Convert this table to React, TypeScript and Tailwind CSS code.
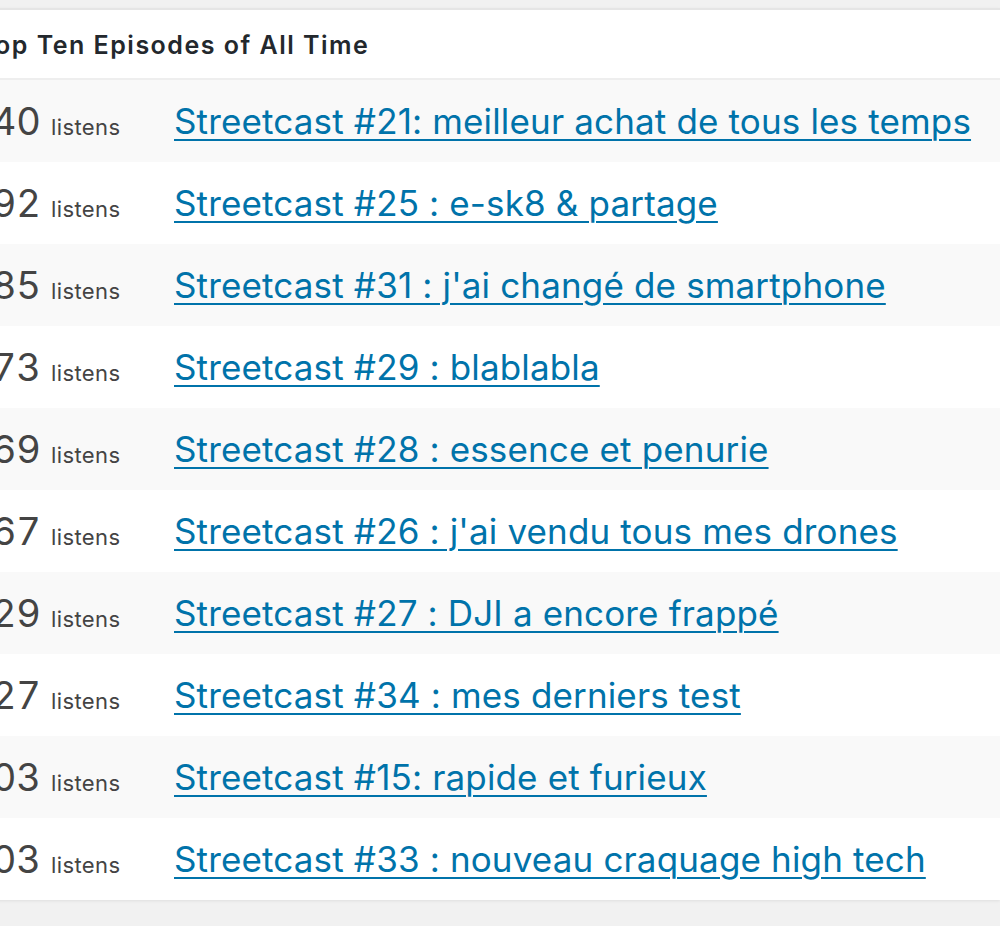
const EPISODES = [
    { count: 240, title: 'Streetcast #21: meilleur achat de tous les temps' },
    { count: 192, title: 'Streetcast #25 : e-sk8 & partage' },
    { count: 185, title: "Streetcast #31 : j'ai changé de smartphone" },
    { count: 173, title: 'Streetcast #29 : blablabla' },
    { count: 169, title: 'Streetcast #28 : essence et penurie' },
    { count: 167, title: "Streetcast #26 : j'ai vendu tous mes drones" },
    { count: 129, title: 'Streetcast #27 : DJI a encore frappé' },
    { count: 127, title: 'Streetcast #34 : mes derniers test' },
    { count: 103, title: 'Streetcast #15: rapide et furieux' },
    { count: 103, title: 'Streetcast #33 : nouveau craquage high tech' },
];

export default function App() {
    return (
        <div className="min-h-screen overflow-hidden bg-[#f1f1f1] pt-[8px] font-['Inter','Liberation_Sans',sans-serif]">
            {/* Widget card, shifted so its left edge is out of view */}
            <div className="-ml-[40px] w-[1040px] border-t-2 border-[#e5e5e5] bg-white shadow-[0_1px_3px_rgba(0,0,0,0.08)]">
                {/* Title */}
                <div className="flex h-[70px] items-center border-b-2 border-[#eeeeee] pl-[19px] pt-[3px]">
                    <h2 className="text-[25px] font-semibold tracking-[1.5px] text-[#23282d]">
                        Top Ten Episodes of All Time
                    </h2>
                </div>

                {/* Rows */}
                {EPISODES.map((ep, i) => (
                    <div
                        key={i}
                        className={`flex h-[82px] items-center ${i % 2 === 0 ? 'bg-[#f9f9f9]' : 'bg-white'}`}
                    >
                        <div className="flex w-[214px] shrink-0 items-baseline pl-[7px] text-[#444]">
                            <span className="text-[38px] leading-none tabular-nums">{ep.count}</span>
                            <span className="ml-[10px] text-[22px] leading-none tracking-[0.4px] text-[#444]">listens</span>
                        </div>
                        <a
                            href="#"
                            className="text-[35px] leading-none tracking-[0.15px] text-[#0073aa] underline decoration-2 underline-offset-[5px]"
                        >
                            {ep.title}
                        </a>
                    </div>
                ))}
            </div>
        </div>
    );
}
